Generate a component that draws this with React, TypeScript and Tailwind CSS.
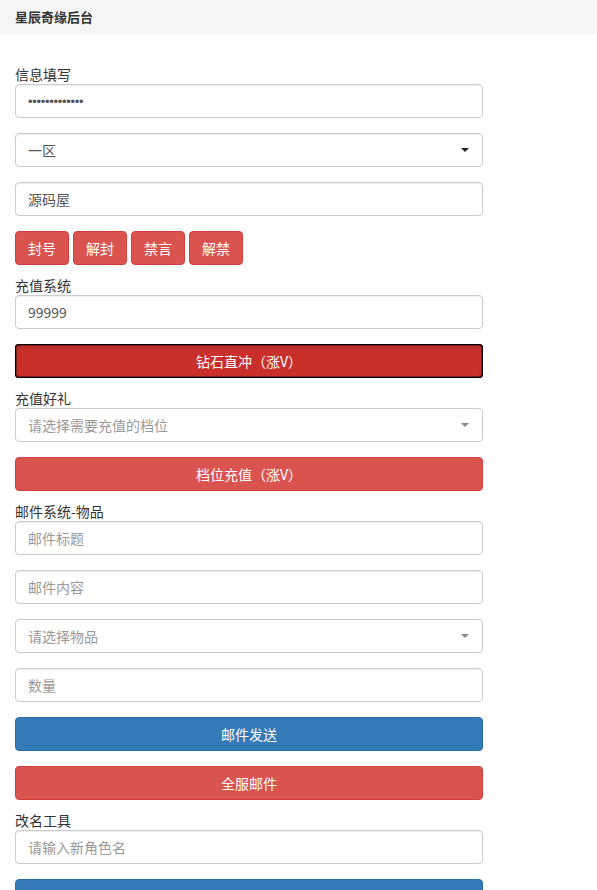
import React from "react";

const font = { fontFamily: '"Noto Sans CJK SC", "Noto Sans", sans-serif' };

function Label({ children }: { children: React.ReactNode }) {
  return <div className="h-5 text-[14px] leading-5 text-[#333]">{children}</div>;
}

function Input({ value, placeholder }: { value?: string; placeholder?: string }) {
  return (
    <input
      type="text"
      readOnly
      defaultValue={value}
      placeholder={placeholder}
      className="block h-[34px] w-full rounded-[4px] border border-[#ccc] bg-white px-3 text-[14px] text-[#555] shadow-[inset_0_1px_1px_rgba(0,0,0,0.075)] outline-none placeholder:text-[#999]"
      style={font}
    />
  );
}

function Password() {
  return (
    <div className="flex h-[34px] w-full items-center rounded-[4px] border border-[#ccc] bg-white px-3 text-[#555] shadow-[inset_0_1px_1px_rgba(0,0,0,0.075)]">
      <span className="text-[13px] leading-none tracking-[-0.3px]" style={{ fontFamily: '"Liberation Sans", sans-serif' }}>
        •••••••••••••
      </span>
    </div>
  );
}

function Select({ text, placeholder }: { text: string; placeholder?: boolean }) {
  return (
    <div
      className={`flex h-[34px] w-full items-center justify-between rounded-[4px] border bg-white pl-3 pr-[13px] text-[14px] ${
        placeholder ? "border-[#ccc] text-[#999]" : "border-[#ccc] text-[#555] shadow-[inset_0_1px_1px_rgba(0,0,0,0.075)]"
      }`}
    >
      <span>{text}</span>
      <svg width="8" height="4" viewBox="0 0 8 4">
        <path d="M0 0 L8 0 L4 4 Z" fill={placeholder ? "#888" : "#222"} />
      </svg>
    </div>
  );
}

function Btn({
  children,
  color,
  full = true,
  active = false,
}: {
  children: React.ReactNode;
  color: "red" | "blue";
  full?: boolean;
  active?: boolean;
}) {
  let cls = "";
  if (active) {
    cls =
      "bg-[#c9302c] shadow-[inset_0_0_0_1px_#000,inset_0_0_0_2px_#7a1f1c,inset_0_3px_5px_rgba(0,0,0,0.125)]";
  } else if (color === "red") {
    cls = "bg-[#d9534f] border border-[#d43f3a]";
  } else {
    cls = "bg-[#337ab7] border border-[#2e6da4]";
  }
  return (
    <button
      className={`h-[34px] rounded-[4px] text-[14px] leading-5 text-white ${full ? "w-full" : "w-[54px]"} ${cls}`}
      style={font}
    >
      {children}
    </button>
  );
}

export default function App() {
  return (
    <div className="min-h-[890px] bg-white text-[#333]" style={font}>
      <div className="flex h-[34px] items-center bg-[#f5f5f5] px-[15px] text-[13px] font-bold text-[#333]">
        星辰奇缘后台
      </div>
      <div className="w-[483px] pl-[15px] pt-[30px] pb-10">
        <Label>信息填写</Label>
        <div className="mb-[15px]">
          <Password />
        </div>
        <div className="mb-[15px]">
          <Select text="一区" />
        </div>
        <div className="mb-[15px]">
          <Input value="源码屋" />
        </div>
        <div className="mb-[10px] flex gap-1">
          <Btn color="red" full={false}>封号</Btn>
          <Btn color="red" full={false}>解封</Btn>
          <Btn color="red" full={false}>禁言</Btn>
          <Btn color="red" full={false}>解禁</Btn>
        </div>

        <Label>充值系统</Label>
        <div className="mb-[15px]">
          <Input value="99999" />
        </div>
        <div className="mb-[10px]">
          <Btn color="red" active>钻石直冲（涨V）</Btn>
        </div>

        <Label>充值好礼</Label>
        <div className="mb-[15px]">
          <Select text="请选择需要充值的档位" placeholder />
        </div>
        <div className="mb-[10px]">
          <Btn color="red">档位充值（涨V）</Btn>
        </div>

        <Label>邮件系统-物品</Label>
        <div className="mb-[15px]">
          <Input placeholder="邮件标题" />
        </div>
        <div className="mb-[15px]">
          <Input placeholder="邮件内容" />
        </div>
        <div className="mb-[15px]">
          <Select text="请选择物品" placeholder />
        </div>
        <div className="mb-[15px]">
          <Input placeholder="数量" />
        </div>
        <div className="mb-[15px]">
          <Btn color="blue">邮件发送</Btn>
        </div>
        <div className="mb-[10px]">
          <Btn color="red">全服邮件</Btn>
        </div>

        <Label>改名工具</Label>
        <div className="mb-[15px]">
          <Input placeholder="请输入新角色名" />
        </div>
        <div className="mb-[15px]">
          <Btn color="blue">确认改名</Btn>
        </div>
      </div>
    </div>
  );
}
